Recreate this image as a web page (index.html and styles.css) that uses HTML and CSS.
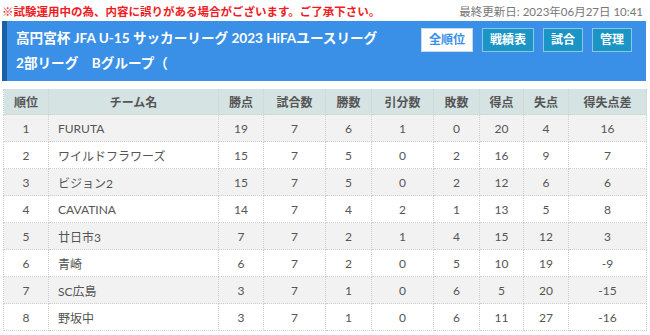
FILE: index.html
```html
<!DOCTYPE html>
<html lang="ja">
<head>
<meta charset="utf-8">
<link rel="stylesheet" href="styles.css">
</head>
<body>
<div class="page">
  <div class="topbar">
    <span class="notice">※試験運用中の為、内容に誤りがある場合がございます。ご了承下さい。</span>
    <span class="updated">最終更新日: 2023年06月27日 10:41</span>
  </div>
  <div class="headbox">
    <div class="title">高円宮杯 JFA U-15 サッカーリーグ 2023 HiFAユースリーグ<br>2部リーグ　Bグループ（</div>
    <div class="btns">
      <span class="btn active">全順位</span>
      <span class="btn">戦績表</span>
      <span class="btn">試合</span>
      <span class="btn">管理</span>
    </div>
  </div>
  <table class="standings">
    <colgroup>
      <col style="width:45px"><col style="width:170px"><col style="width:45px"><col style="width:62px"><col style="width:46px"><col style="width:62px"><col style="width:46px"><col style="width:44px"><col style="width:45px"><col style="width:78px">
    </colgroup>
    <thead>
      <tr><th>順位</th><th>チーム名</th><th>勝点</th><th>試合数</th><th>勝数</th><th>引分数</th><th>敗数</th><th>得点</th><th>失点</th><th>得失点差</th></tr>
    </thead>
    <tbody>
      <tr><td>1</td><td class="team">FURUTA</td><td>19</td><td>7</td><td>6</td><td>1</td><td>0</td><td>20</td><td>4</td><td>16</td></tr>
      <tr><td>2</td><td class="team">ワイルドフラワーズ</td><td>15</td><td>7</td><td>5</td><td>0</td><td>2</td><td>16</td><td>9</td><td>7</td></tr>
      <tr><td>3</td><td class="team">ビジョン2</td><td>15</td><td>7</td><td>5</td><td>0</td><td>2</td><td>12</td><td>6</td><td>6</td></tr>
      <tr><td>4</td><td class="team">CAVATINA</td><td>14</td><td>7</td><td>4</td><td>2</td><td>1</td><td>13</td><td>5</td><td>8</td></tr>
      <tr><td>5</td><td class="team">廿日市3</td><td>7</td><td>7</td><td>2</td><td>1</td><td>4</td><td>15</td><td>12</td><td>3</td></tr>
      <tr><td>6</td><td class="team">青崎</td><td>6</td><td>7</td><td>2</td><td>0</td><td>5</td><td>10</td><td>19</td><td>-9</td></tr>
      <tr><td>7</td><td class="team">SC広島</td><td>3</td><td>7</td><td>1</td><td>0</td><td>6</td><td>5</td><td>20</td><td>-15</td></tr>
      <tr><td>8</td><td class="team">野坂中</td><td>3</td><td>7</td><td>1</td><td>0</td><td>6</td><td>11</td><td>27</td><td>-16</td></tr>
    </tbody>
  </table>
</div>
</body>
</html>
```
FILE: styles.css
```css
html, body {
  margin: 0;
  padding: 0;
  background: #fff;
}
body {
  font-family: Lato, "Noto Sans CJK JP", sans-serif;
  color: #555;
}
.page {
  padding: 0 4px 0 2px;
}
.topbar {
  display: flex;
  justify-content: space-between;
  align-items: center;
  height: 21px;
}
.notice {
  color: #ee1c25;
  font-weight: bold;
  font-size: 11.5px;
  font-family: "Noto Sans CJK JP", sans-serif;
}
.updated {
  color: #777;
  font-size: 11.5px;
  padding-right: 3px;
}
.headbox {
  display: flex;
  justify-content: space-between;
  align-items: flex-start;
  background: #3a8fe6;
  border-left: 5px solid #1b5fa6;
  height: 60px;
  box-sizing: border-box;
  padding: 5px 14px 5px 9px;
}
.title {
  color: #fff;
  font-weight: bold;
  font-size: 13.6px;
  line-height: 25px;
}
.btns {
  display: flex;
  gap: 9px;
  margin-top: 2px;
}
.btn {
  display: inline-block;
  height: 24px;
  box-sizing: border-box;
  line-height: 22px;
  padding: 0 7px;
  font-size: 12px;
  font-weight: bold;
  color: #fff;
  background: #1b95c6;
  border: 1px solid #8fc4e4;
}
.btn.active {
  background: #fff;
  color: #3a8fe6;
  border-color: #c9d9e6;
}
.standings {
  margin-top: 8px;
  margin-left: 1px;
  border-collapse: collapse;
  table-layout: fixed;
  width: 643px;
  font-size: 12px;
}
.standings th {
  background: #d6e3e3;
  color: #555;
  font-weight: bold;
  height: 25px;
  padding: 0;
  text-align: center;
  border: 1px dotted #c8d4d4;
  border-top: none;
}
.standings td {
  height: 26px;
  padding: 0;
  text-align: center;
  border: 1px dotted #cfcfcf;
}
.standings td.team {
  text-align: left;
  padding-left: 9px;
}
.standings tbody tr:nth-child(odd) {
  background: #f2f2f2;
}
.standings tbody tr:nth-child(even) {
  background: #fff;
}
```
